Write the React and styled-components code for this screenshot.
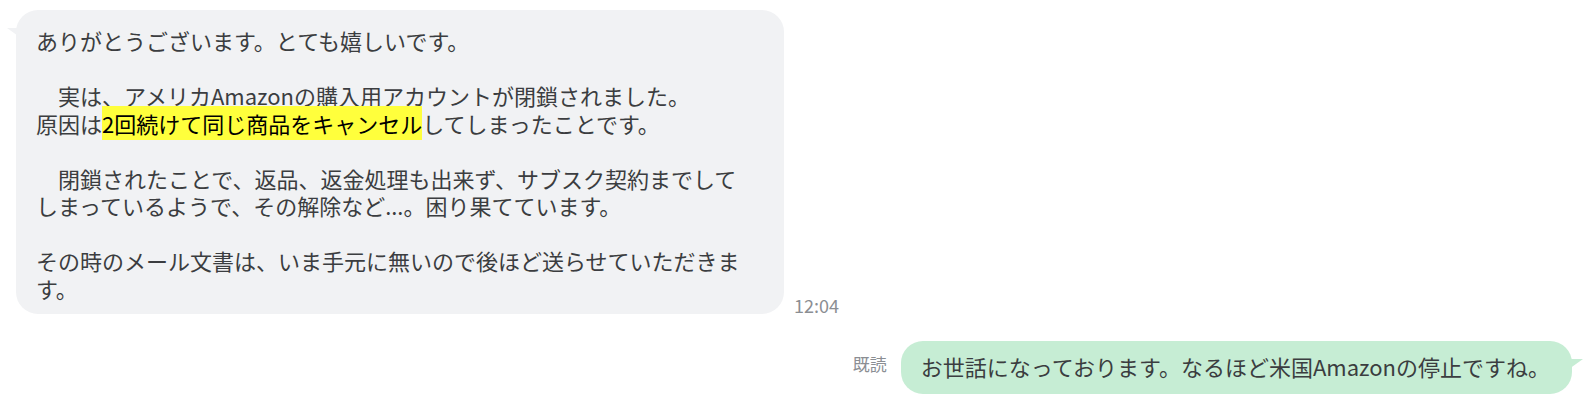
import styled, { createGlobalStyle } from "styled-components";

const GlobalStyle = createGlobalStyle`
  html, body {
    margin: 0;
    padding: 0;
    background: #ffffff;
  }
  body {
    font-family: "Noto Sans CJK JP", "Noto Sans", sans-serif;
  }
`;

const Thread = styled.div`
  width: 1592px;
  height: 404px;
  box-sizing: border-box;
  padding: 10px 20px 0 16px;
  display: flex;
  flex-direction: column;
  gap: 27px;
`;

const Row = styled.div`
  display: flex;
  justify-content: ${(p) => (p.$mine ? "flex-end" : "flex-start")};
  align-items: ${(p) => (p.$mine ? "center" : "flex-end")};
  gap: ${(p) => (p.$mine ? "14px" : "10px")};
`;

const Bubble = styled.div`
  position: relative;
  box-sizing: border-box;
  max-width: 768px;
  padding: ${(p) => (p.$mine ? "12px 22px 13px 20px" : "17px 30px 12px 20px")};
  border-radius: 22px;
  background: ${(p) => (p.$mine ? "#c6edd4" : "#f1f2f4")};
  color: #3b3d40;
  font-size: 22px;
  line-height: 27.5px;
  white-space: pre-wrap;
  word-break: break-all;

  &::before {
    content: "";
    position: absolute;
    top: 18px;
    width: 14px;
    height: 10px;
    background: inherit;
    ${(p) =>
      p.$mine
        ? `right: -11px; clip-path: polygon(0 0, 100% 0, 0 100%);`
        : `left: -9px; clip-path: polygon(0 0, 100% 0, 100% 100%);`}
  }
`;

const Mark = styled.span`
  background: #ffff3c;
  color: #000000;
  padding: 1px 0;
`;

const Meta = styled.div`
  font-size: ${(p) => (p.$read ? "17px" : "18px")};
  line-height: 20px;
  color: #8b8e93;
  flex-shrink: 0;
  margin-bottom: ${(p) => (p.$read ? "6px" : "-1px")};
`;

const App = () => {
  return (
    <>
      <GlobalStyle />
      <Thread>
        <Row>
          <Bubble>
            {"ありがとうございます。とても嬉しいです。\n\n　実は、アメリカAmazonの購入用アカウントが閉鎖されました。\n原因は"}
            <Mark>2回続けて同じ商品をキャンセル</Mark>
            {"してしまったことです。\n\n　閉鎖されたことで、返品、返金処理も出来ず、サブスク契約までしてしまっているようで、その解除など...。困り果てています。\n\nその時のメール文書は、いま手元に無いので後ほど送らせていただきます。"}
          </Bubble>
          <Meta>12:04</Meta>
        </Row>
        <Row $mine>
          <Meta $read>既読</Meta>
          <Bubble $mine>お世話になっております。なるほど米国Amazonの停止ですね。</Bubble>
        </Row>
      </Thread>
    </>
  );
};

export default App;
